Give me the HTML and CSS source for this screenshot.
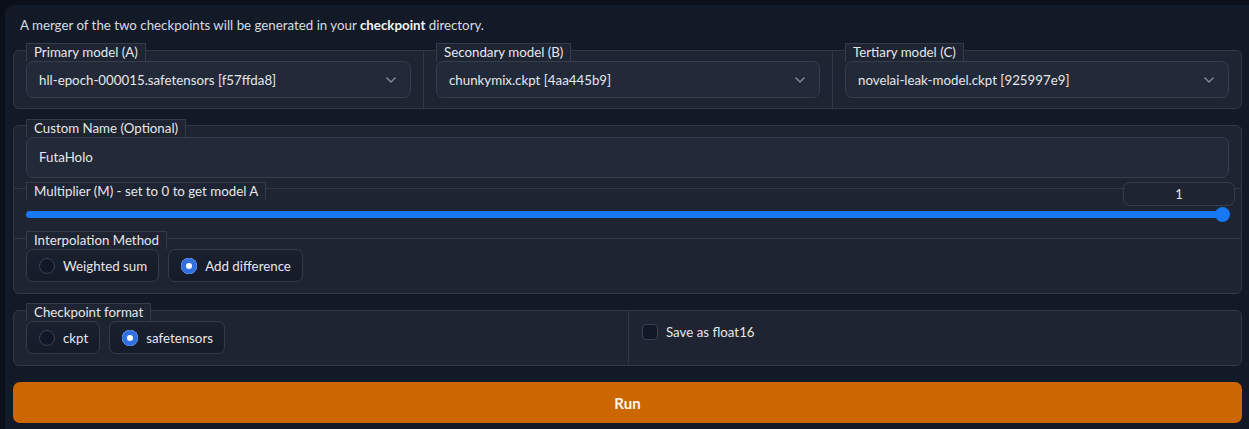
FILE: index.html
```html
<!DOCTYPE html>
<html lang="en">
<head>
    <meta charset="UTF-8">
    <meta name="viewport" content="width=device-width, initial-scale=1.0">
    <title>Checkpoint Merger</title>
    <link rel="stylesheet" href="styles.css">
</head>
<body>
    <div class="tab">
        <p class="note">A merger of the two checkpoints will be generated in your <strong>checkpoint</strong> directory.</p>

        <div class="block models">
            <div class="col">
                <span class="label">Primary model (A)</span>
                <div class="dropdown">
                    <span>hll-epoch-000015.safetensors [f57ffda8]</span>
                    <svg class="chevron" viewBox="0 0 12 8" width="12" height="8"><path d="M1.5 1.5l4.5 4.5 4.5-4.5"/></svg>
                </div>
            </div>
            <div class="col">
                <span class="label">Secondary model (B)</span>
                <div class="dropdown">
                    <span>chunkymix.ckpt [4aa445b9]</span>
                    <svg class="chevron" viewBox="0 0 12 8" width="12" height="8"><path d="M1.5 1.5l4.5 4.5 4.5-4.5"/></svg>
                </div>
            </div>
            <div class="col">
                <span class="label">Tertiary model (C)</span>
                <div class="dropdown">
                    <span>novelai-leak-model.ckpt [925997e9]</span>
                    <svg class="chevron" viewBox="0 0 12 8" width="12" height="8"><path d="M1.5 1.5l4.5 4.5 4.5-4.5"/></svg>
                </div>
            </div>
        </div>

        <div class="block stack">
            <div class="sub">
                <span class="label">Custom Name (Optional)</span>
                <div class="textbox">FutaHolo</div>
            </div>
            <div class="sub slider-sub">
                <div class="slider-head">
                    <span class="label">Multiplier (M) - set to 0 to get model A</span>
                    <div class="number">1</div>
                </div>
                <div class="track"><span class="thumb"></span></div>
            </div>
            <div class="sub">
                <span class="label">Interpolation Method</span>
                <div class="radios">
                    <label class="radio"><span class="dot"></span>Weighted sum</label>
                    <label class="radio"><span class="dot on"></span>Add difference</label>
                </div>
            </div>
        </div>

        <div class="block format">
            <div class="col">
                <span class="label">Checkpoint format</span>
                <div class="radios">
                    <label class="radio"><span class="dot"></span>ckpt</label>
                    <label class="radio"><span class="dot on"></span>safetensors</label>
                </div>
            </div>
            <div class="col check-col">
                <label class="check"><span class="box"></span>Save as float16</label>
            </div>
        </div>

        <button class="run">Run</button>
    </div>
</body>
</html>
```

FILE: styles.css
```css
body {
    margin: 0;
    background-color: #0b0f19;
    font-family: Lato, "Open Sans", sans-serif;
    font-size: 13.3px;
    color: #e5e7eb;
}

.tab {
    margin: 5px 0 0 5px;
    padding: 10px 7px 6px 8px;
    background-color: #131a27;
    border-radius: 8px 0 0 0;
}

.note {
    margin: 0 0 14px 1px;
    line-height: 21px;
    padding-left: 6px;
    color: #d9dce1;
}

.note strong {
    color: #f3f4f6;
}

.block {
    background-color: #1e2432;
    border: 1px solid #303746;
    border-radius: 6px;
    margin-bottom: 16px;
}

.label {
    display: block;
    width: fit-content;
    box-sizing: border-box;
    height: 18px;
    line-height: 17px;
    margin-top: -8px;
    padding: 0 7px;
    border: 1px solid #343b49;
    border-bottom: none;
    background-color: #1e2432;
    color: #e5e7eb;
}

/* three model dropdowns */
.models {
    display: grid;
    grid-template-columns: 1fr 1fr 1fr;
}

.col {
    padding: 0 12px 10px;
}

.col + .col {
    border-left: 1px solid #303746;
}

.dropdown {
    display: flex;
    align-items: center;
    justify-content: space-between;
    box-sizing: border-box;
    height: 37px;
    padding: 0 13px 0 12px;
    background-color: #222938;
    border: 1px solid #363d4b;
    border-radius: 7px;
    color: #e5e7eb;
}

.chevron {
    fill: none;
    stroke: #858c99;
    stroke-width: 1.3;
}

/* custom name / multiplier / interpolation */
.sub {
    padding: 0 12px 11px;
}

.sub + .sub {
    border-top: 1px solid #303746;
}

.stack .sub:first-child {
    padding-bottom: 10px;
}

.stack .sub:first-child .label {
    margin-top: -7px;
}

.textbox {
    box-sizing: border-box;
    height: 41px;
    line-height: 39px;
    padding: 0 12px;
    background-color: #222938;
    border: 1px solid #363d4b;
    border-radius: 7px;
}

.slider-sub {
    padding-bottom: 20px;
}

.slider-head {
    display: flex;
    justify-content: space-between;
    align-items: flex-start;
    margin-right: -6px;
    margin-top: -7px;
}

.slider-head .label {
    margin-top: 0;
}

.number {
    box-sizing: border-box;
    width: 112px;
    height: 24px;
    line-height: 22px;
    text-align: center;
    background-color: #1e2432;
    border: 1px solid #363d4b;
    border-radius: 7px;
    font-size: 13px;
}

.track {
    position: relative;
    height: 7px;
    margin-top: 5px;
    background-color: #1877f2;
    border-radius: 4px;
}

.thumb {
    position: absolute;
    right: -1px;
    top: -4px;
    width: 15px;
    height: 15px;
    border-radius: 50%;
    background-color: #1877f2;
}

.radios {
    display: flex;
    gap: 9px;
}

.radio {
    display: flex;
    align-items: center;
    gap: 8px;
    box-sizing: border-box;
    height: 33px;
    padding: 0 11px 0 12px;
    background: linear-gradient(#1a202d, #151b28);
    border: 1px solid #343b49;
    border-radius: 7px;
    color: #e5e7eb;
}

.dot {
    box-sizing: border-box;
    width: 16px;
    height: 16px;
    border-radius: 50%;
    background-color: #111726;
    border: 1px solid #3b4250;
}

.dot.on {
    background-color: #3170e0;
    border: none;
    box-shadow: inset 0 0 0 5px #3170e0, inset 0 0 0 8px #ffffff;
}

/* checkpoint format row */
.format {
    display: grid;
    grid-template-columns: 614px 1fr;
}

.format .col {
    padding-bottom: 11px;
}

.check-col {
    padding: 13px 13px;
}

.check {
    display: flex;
    align-items: center;
    gap: 8px;
    height: 16px;
    color: #e5e7eb;
}

.box {
    box-sizing: border-box;
    width: 16px;
    height: 16px;
    border-radius: 4px;
    background-color: #111726;
    border: 1px solid #3b4250;
}

.run {
    display: block;
    width: 100%;
    height: 41px;
    margin: 0;
    border: none;
    border-radius: 7px;
    background-color: #cc6600;
    color: #fff7ee;
    font-family: inherit;
    font-size: 15px;
    font-weight: 700;
    cursor: pointer;
}
```
